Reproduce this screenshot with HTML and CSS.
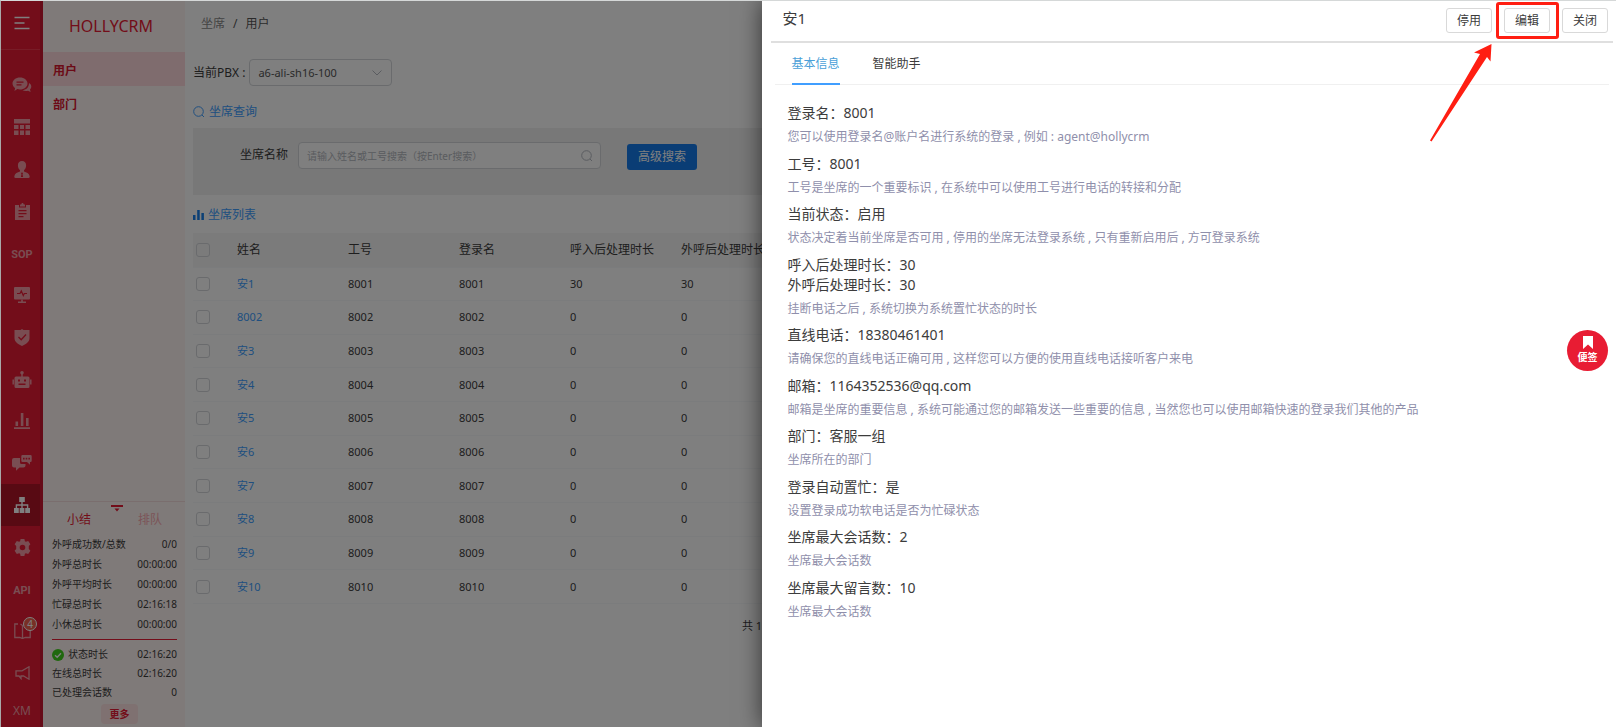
FILE: index.html
```html
<!DOCTYPE html>
<html lang="zh-CN">
<head>
  <meta charset="UTF-8" />
  <meta name="viewport" content="width=device-width, initial-scale=1.0" />
  <title>HOLLYCRM</title>
  <link rel="stylesheet" href="styles.css">
</head>
<body>
  <div class="app">
    <nav class="rail">
      <button class="rail-toggle" aria-label="菜单">
        <svg width="16" height="14" viewBox="0 0 16 14"><path d="M0.5 1.5h15M0.5 7h10M0.5 12.500h15" stroke="#fff" stroke-width="1.300" fill="none"/></svg>
      </button>
      <div class="rail-list">
        <a href="#" class="rail-item" aria-label="会话"><svg width="20" height="16" viewBox="0 0 20 16"><path fill-rule="evenodd" d="M8 0.500c4.300 0 7.500 2.700 7.500 6s-3.200 6-7.500 6c-1 0-1.900-.1-2.700-.4L2.500 14l.6-2.900C1.500 10 .5 8.400.5 6.500c0-3.300 3.200-6 7.500-6zM4.500 4.500v1.200h7V4.500zM4.500 7.300v1.200h5V7.300z"/><path d="M17 6c1.500.8 2.300 2 2.300 3.600 0 1.200-.5 2.200-1.300 3l.6 2.400-2.600-1.200c-2 .5-4.200.2-5.600-.6C14 13 17 10.500 17 6z"/></svg></a>
        <a href="#" class="rail-item" aria-label="报表"><svg width="16" height="16" viewBox="0 0 16 16"><path d="M0 0h16v4.500H0zM0 6h4.500v4H0zM6 6h4v4H6zM11.500 6H16v4h-4.500zM0 11.500h4.500V16H0zM6 11.500h4V16H6zM11.500 11.500H16V16h-4.500z"/></svg></a>
        <a href="#" class="rail-item" aria-label="客户"><svg width="16" height="17" viewBox="0 0 16 17"><path fill-rule="evenodd" d="M8 0c2.600 0 4.100 1.700 4.100 4.300 0 2-.8 4-2.100 5v1.200c2.500.8 5.100 1.700 5.600 4.500.3 1.200-.1 2-1.100 2h-13c-1 0-1.400-.8-1.100-2 .5-2.800 3.100-3.700 5.600-4.500V9.300c-1.300-1-2.100-3-2.100-5C3.900 1.700 5.400 0 8 0zM8 11.300l-1 1 .5 1-.6 2.700h2.200l-.6-2.700.5-1z"/></svg></a>
        <a href="#" class="rail-item" aria-label="工单"><svg width="15" height="17" viewBox="0 0 15 17"><path fill-rule="evenodd" d="M0 2h4v2.500h7V2h4v15H0zM3.500 7v1.200h8V7zM3.500 10v1.200h8V10zM3.500 13v1.200h5V13z"/><path d="M5 1.500h1.200C6.300.6 6.800 0 7.500 0s1.200.6 1.300 1.500H10v2H5z"/></svg></a>
        <a href="#" class="rail-item rail-text">SOP</a>
        <a href="#" class="rail-item" aria-label="监控"><svg width="16" height="16" viewBox="0 0 16 16"><path d="M1 0h14q1 0 1 1v10.500q0 1-1 1H1q-1 0-1-1V1q0-1 1-1z"/><path d="M3 6.500h3L7.300 4l2 4.500 1-2H13" stroke="#e61a34" stroke-width="1.200" fill="none"/><path d="M7.200 12.500h1.600V14.500H12V16H4v-1.500h3.200z"/></svg></a>
        <a href="#" class="rail-item" aria-label="质检"><svg width="16" height="17" viewBox="0 0 16 17"><path d="M8 0l1.500 1H15.500v8c0 4-3.500 6.300-7.500 8-4-1.700-7.500-4-7.500-8V1h6z"/><path d="M4.500 8l2.700 2.700L12 5.500" stroke="#e61a34" stroke-width="1.300" fill="none"/></svg></a>
        <a href="#" class="rail-item" aria-label="机器人"><svg width="20" height="17" viewBox="0 0 20 17"><path d="M0.500 8.500h1.400v5H.5zM18.100 8.500h1.400v5h-1.400zM9.300 3h1.400v3H9.300z"/><circle cx="10" cy="1.800" r="1.800"/><path fill-rule="evenodd" d="M4 5.500h12q1.500 0 1.500 1.500v8.500q0 1.500-1.500 1.500H4q-1.500 0-1.500-1.500V7q0-1.500 1.500-1.500zM6 8.500v2h2v-2zM12 8.500v2h2v-2zM6.500 12.500v1.500h7v-1.500z"/></svg></a>
        <a href="#" class="rail-item" aria-label="统计"><svg width="16" height="16" viewBox="0 0 16 16"><path d="M0 14.200h16V16H0zM1.500 8.500h2.600v4.500H1.500zM6.800 0h2.600v13H6.800zM12 5h2.600v8H12z"/></svg></a>
        <a href="#" class="rail-item" aria-label="消息"><svg width="20" height="16" viewBox="0 0 20 16"><path d="M2 3h6v4.500q0 1.500 1.500 1.500H13.500v1.500q0 2-2 2H7.500L4 15.700v-3.200H2q-2 0-2-2V5q0-2 2-2z"/><path fill-rule="evenodd" d="M10.500 0h8q1.200 0 1.200 1.200v4.600Q19.700 7 18.500 7H18v2.700L15 7h-4.500Q9.300 7 9.300 5.800V1.200Q9.300 0 10.500 0zM11 2.800v1.600h1.600V2.800zM13.700 2.800v1.600h1.600V2.800zM16.400 2.800v1.600H18V2.800z"/></svg></a>
        <a href="#" class="rail-item active" aria-label="坐席"><svg width="16" height="16" viewBox="0 0 16 16"><path d="M5.200 0h5.600v5H5.200zM0 11h4.800v5H0zM5.600 11h4.800v5H5.600zM11.200 11H16v5h-4.800z"/><path d="M8 5v6M2.400 11V8h11.200v3" stroke="#fff" stroke-width="1.400" fill="none"/></svg></a>
        <a href="#" class="rail-item" aria-label="设置"><svg width="17" height="17" viewBox="0 0 17 17"><path fill-rule="evenodd" d="M6.600 0h3.800l.5 2.300 1 .5L14.200 2l2.200 3.300-1.600 1.800v2.800l1.600 1.800-2.200 3.300-2.300-.8-1 .5-.5 2.300H6.600l-.5-2.300-1-.5-2.300.8L.6 11.700l1.600-1.800V7.100L.6 5.300 2.800 2l2.300.8 1-.5zM8.500 5.700a2.800 2.800 0 1 0 0 5.600 2.800 2.800 0 0 0 0-5.600z"/></svg></a>
        <a href="#" class="rail-item rail-text">API</a>
        <a href="#" class="rail-item line" aria-label="文档"><svg width="17" height="16" viewBox="0 0 17 16"><path d="M4 1H.8v13.500h5L8.500 15.500l2.700-1h5V7M8.500 15V2.500L6.500 1"/></svg><span class="badge">4</span></a>
        <a href="#" class="rail-item line" aria-label="公告"><svg width="15" height="14" viewBox="0 0 15 14"><path d="M14 .8v12.400L8.500 10H6v2.500L4 10H1V4.800h6z"/></svg></a>
        <a href="#" class="rail-item rail-user">XM</a>
      </div>
    </nav>

    <aside class="side">
      <div class="brand">HOLLYCRM</div>
      <a href="#" class="side-link active">用户</a>
      <a href="#" class="side-link">部门</a>

      <div class="stats">
        <svg class="stats-handle" width="12" height="7" viewBox="0 0 12 7"><path d="M0 0h12v2H0zM3.500 3.500h5L6 6.500z"/></svg>
        <div class="stats-tabs">
          <a href="#">小结</a>
          <a href="#" class="off">排队</a>
        </div>
        <ul class="stats-list">
          <li><span>外呼成功数/总数</span><span>0/0</span></li>
          <li><span>外呼总时长</span><span>00:00:00</span></li>
          <li><span>外呼平均时长</span><span>00:00:00</span></li>
          <li><span>忙碌总时长</span><span>02:16:18</span></li>
          <li><span>小休总时长</span><span>00:00:00</span></li>
        </ul>
        <ul class="stats-list">
          <li><span class="state"><svg width="12" height="12" viewBox="0 0 12 12"><circle cx="6" cy="6" r="6" fill="#3fd01c"/><path d="M3 6.200l2.200 2.100L9 4.300" stroke="#fff" stroke-width="1.400" fill="none"/></svg>状态时长</span><span>02:16:20</span></li>
          <li><span>在线总时长</span><span>02:16:20</span></li>
          <li><span>已处理会话数</span><span>0</span></li>
        </ul>
        <button class="more">更多</button>
      </div>
    </aside>

    <main class="main">
      <div class="crumbs"><a href="#">坐席</a><span>/</span><span>用户</span></div>

      <div class="pbx">
        <label for="pbx">当前PBX :</label>
        <div class="select">
          <select id="pbx"><option>a6-ali-sh16-100</option></select>
          <svg width="10" height="6" viewBox="0 0 10 6"><path d="M0.500 0.500L5 5l4.500-4.500"/></svg>
        </div>
      </div>

      <h2 class="section"><svg width="12" height="12" viewBox="0 0 12 12" fill="none" stroke="#409eff"><circle cx="5.500" cy="5.500" r="4.800"/><path d="M9 9l2 2"/></svg>坐席查询</h2>
      <form class="search">
        <label for="name">坐席名称</label>
        <div class="search-box">
          <input type="text" id="name" placeholder="请输入姓名或工号搜索（按Enter搜索）" />
          <svg width="12" height="12" viewBox="0 0 12 12"><circle cx="5.500" cy="5.500" r="4.800"/><path d="M9 9l2 2"/></svg>
        </div>
        <button type="button" class="btn-primary">高级搜索</button>
      </form>

      <h2 class="section"><svg width="11" height="10" viewBox="0 0 11 10" fill="#1880ec"><path d="M0 5h2.500v5H0zM4.200 0h2.500v10H4.200zM8.400 3h2.500v7H8.400z"/></svg>坐席列表</h2>
      <table class="list">
        <colgroup><col class="c-check"><col class="c-col"><col class="c-col"><col class="c-col"><col class="c-col"><col></colgroup>
        <thead>
          <tr><th><input type="checkbox" aria-label="全选" /></th><th>姓名</th><th>工号</th><th>登录名</th><th>呼入后处理时长</th><th>外呼后处理时长</th></tr>
        </thead>
        <tbody>
          <tr><td><input type="checkbox" aria-label="安1" /></td><td><a href="#">安1</a></td><td>8001</td><td>8001</td><td>30</td><td>30</td></tr>
          <tr><td><input type="checkbox" aria-label="8002" /></td><td><a href="#">8002</a></td><td>8002</td><td>8002</td><td>0</td><td>0</td></tr>
          <tr><td><input type="checkbox" aria-label="安3" /></td><td><a href="#">安3</a></td><td>8003</td><td>8003</td><td>0</td><td>0</td></tr>
          <tr><td><input type="checkbox" aria-label="安4" /></td><td><a href="#">安4</a></td><td>8004</td><td>8004</td><td>0</td><td>0</td></tr>
          <tr><td><input type="checkbox" aria-label="安5" /></td><td><a href="#">安5</a></td><td>8005</td><td>8005</td><td>0</td><td>0</td></tr>
          <tr><td><input type="checkbox" aria-label="安6" /></td><td><a href="#">安6</a></td><td>8006</td><td>8006</td><td>0</td><td>0</td></tr>
          <tr><td><input type="checkbox" aria-label="安7" /></td><td><a href="#">安7</a></td><td>8007</td><td>8007</td><td>0</td><td>0</td></tr>
          <tr><td><input type="checkbox" aria-label="安8" /></td><td><a href="#">安8</a></td><td>8008</td><td>8008</td><td>0</td><td>0</td></tr>
          <tr><td><input type="checkbox" aria-label="安9" /></td><td><a href="#">安9</a></td><td>8009</td><td>8009</td><td>0</td><td>0</td></tr>
          <tr><td><input type="checkbox" aria-label="安10" /></td><td><a href="#">安10</a></td><td>8010</td><td>8010</td><td>0</td><td>0</td></tr>
        </tbody>
      </table>
      <div class="pager">共 1</div>
    </main>

    <div class="mask"></div>

    <section class="drawer">
      <header class="drawer-head">
        <h1>安1</h1>
        <div class="actions">
          <button class="btn">停用</button>
          <div class="marked">
            <button class="btn">编辑</button>
            <svg class="arrow" width="62" height="98" viewBox="0 0 62 98"><path d="M61.500 0L44 8.500l6 1.500L0 96.500l1.500 1L57 13l3.500 4.500z"/></svg>
          </div>
          <button class="btn">关闭</button>
        </div>
      </header>
      <div class="tabs">
        <a href="#" class="tab active">基本信息</a>
        <a href="#" class="tab">智能助手</a>
      </div>
      <div class="info">
        <div class="field"><p>登录名：8001</p><small>您可以使用登录名@账户名进行系统的登录 , 例如 : agent@hollycrm</small></div>
        <div class="field"><p>工号：8001</p><small>工号是坐席的一个重要标识 , 在系统中可以使用工号进行电话的转接和分配</small></div>
        <div class="field"><p>当前状态：启用</p><small>状态决定着当前坐席是否可用 , 停用的坐席无法登录系统 , 只有重新启用后 , 方可登录系统</small></div>
        <div class="field"><p>呼入后处理时长：30</p><p>外呼后处理时长：30</p><small>挂断电话之后 , 系统切换为系统置忙状态的时长</small></div>
        <div class="field"><p>直线电话：18380461401</p><small>请确保您的直线电话正确可用 , 这样您可以方便的使用直线电话接听客户来电</small></div>
        <div class="field"><p>邮箱：1164352536@qq.com</p><small>邮箱是坐席的重要信息 , 系统可能通过您的邮箱发送一些重要的信息 , 当然您也可以使用邮箱快速的登录我们其他的产品</small></div>
        <div class="field"><p>部门：客服一组</p><small>坐席所在的部门</small></div>
        <div class="field"><p>登录自动置忙：是</p><small>设置登录成功软电话是否为忙碌状态</small></div>
        <div class="field"><p>坐席最大会话数：2</p><small>坐席最大会话数</small></div>
        <div class="field"><p>坐席最大留言数：10</p><small>坐席最大会话数</small></div>
      </div>
    </section>

    <button class="note">
      <svg width="10" height="13" viewBox="0 0 10 13"><path d="M0 0h10v13L5 8.500 0 13z" fill="#fff"/></svg>
      便签
    </button>
  </div>
</body>
</html>
```
FILE: styles.css
```css
*,
*::before,
*::after {
  box-sizing: border-box;
}

body {
  margin: 0;
  background: #fff;
  color: #3c3c3c;
  font-family: "Noto Sans", "Noto Sans CJK SC", sans-serif;
  font-size: 12px;
  line-height: 20px;
}

a {
  color: inherit;
  text-decoration: none;
}

h1,
h2,
p,
ul {
  margin: 0;
  padding: 0;
  font-weight: normal;
  list-style: none;
}

button,
input,
select {
  font: inherit;
  color: inherit;
  margin: 0;
}

button {
  cursor: pointer;
  padding: 0;
  border: 0;
}

.app {
  position: relative;
  display: grid;
  grid-template-columns: 42px 142px 1fr;
  height: 100vh;
  overflow: hidden;
  border-top: 1px solid #d5d8d8;
  border-left: 1px solid #a9a9a9;
}

/* left icon bar */
.rail {
  display: flex;
  flex-direction: column;
  background: #e61a34;
  border-right: 3px solid #cc1730;
}

.rail-toggle {
  flex: none;
  height: 49px;
  padding: 2px 0 0 3px;
  background: none;
  border-bottom: 1px solid #f0384e;
}

.rail-list {
  padding-top: 14px;
}

.rail-item {
  position: relative;
  display: flex;
  align-items: center;
  justify-content: center;
  height: 42px;
  padding-left: 3px;
  color: #f39aa5;
}

.rail-item svg {
  fill: currentColor;
}

.rail-item.line svg {
  fill: none;
  stroke: currentColor;
  stroke-width: 1.3;
}

.rail-item.active {
  background: #b01426;
  color: #fff;
}

.rail-text {
  padding-top: 3px;
  font-family: Roboto, sans-serif;
  font-weight: bold;
  font-size: 11px;
}

.rail-user {
  height: 34px;
}

.badge {
  position: absolute;
  top: 7px;
  right: 3px;
  width: 14px;
  height: 14px;
  border: 1px solid #fff;
  border-radius: 50%;
  background: #f0604d;
  color: #fff;
  font-size: 10px;
  line-height: 12px;
  text-align: center;
}

/* second level menu */
.side {
  display: flex;
  flex-direction: column;
  background: #fff4f2;
}

.brand {
  height: 51px;
  padding-right: 6px;
  line-height: 50px;
  font-size: 16px;
  text-align: center;
  color: #e61a34;
}

.side-link {
  height: 34px;
  padding: 0 10px;
  line-height: 38px;
  font-weight: bold;
  color: #d8152e;
}

.side-link.active {
  background: #ffd9dc;
}

.stats {
  margin-top: auto;
  padding: 3px 8px 4px 9px;
  border-top: 1px solid #f5dcdc;
  font-size: 10px;
  text-align: center;
}

.stats-handle {
  display: block;
  margin-left: 59px;
  fill: #e61a34;
}

.stats-tabs {
  display: flex;
  justify-content: space-between;
  padding: 0 15px 6px;
  line-height: 16px;
  font-size: 12px;
  color: #e61a34;
}

.stats-tabs .off {
  color: #f8a9b1;
}

.stats-list {
  padding-bottom: 5px;
}

.stats-list + .stats-list {
  padding: 5px 0 2px;
  line-height: 19px;
  border-top: 1px solid #e61a34;
}

.stats-list li {
  display: flex;
  justify-content: space-between;
}

.state {
  display: flex;
  align-items: center;
  gap: 4px;
}

.more {
  width: 37px;
  height: 20px;
  margin-left: 10px;
  border-radius: 4px;
  background: #ffe2e2;
  color: #e61a34;
  font-weight: bold;
}

/* page content */
.main {
  padding: 13px 8px;
}

.crumbs {
  display: flex;
  gap: 8px;
  padding-left: 8px;
  color: #555;
}

.crumbs a {
  color: #888;
}

.pbx {
  display: flex;
  align-items: center;
  gap: 4px;
  margin-top: 25px;
}

.select {
  position: relative;
}

.select select {
  display: block;
  width: 143px;
  height: 27px;
  padding: 0 8px;
  appearance: none;
  border: 1px solid #d4d6da;
  border-radius: 4px;
  background: #fff;
  font-size: 11px;
  color: #555;
}

.select svg {
  position: absolute;
  right: 10px;
  top: 11px;
  fill: none;
  stroke: #b4b8c0;
}

.section {
  display: flex;
  align-items: center;
  gap: 4px;
  margin-top: 16px;
  font-size: 12px;
  color: #409eff;
}

.search {
  display: flex;
  align-items: flex-start;
  height: 67px;
  margin-top: 6px;
  padding: 14px 47px;
  background: #f0f0f0;
}

.search label {
  margin-right: 10px;
  line-height: 26px;
}

.search-box {
  position: relative;
  margin-right: 26px;
}

.search-box input {
  display: block;
  width: 303px;
  height: 27px;
  padding: 0 8px;
  border: 1px solid #d4d6da;
  border-radius: 4px;
  background: #fff;
  font-size: 10px;
}

.search-box input::placeholder {
  color: #b4b8c0;
}

.search-box svg {
  position: absolute;
  right: 8px;
  top: 8px;
  fill: none;
  stroke: #b4b8c0;
}

.btn-primary {
  width: 70px;
  height: 26px;
  margin-top: 2px;
  border-radius: 3px;
  background: #147bea;
  color: #fff;
}

.search + .section {
  margin-top: 10px;
}

.list {
  width: 100%;
  height: 371px;
  margin-top: 8px;
  table-layout: fixed;
  border-collapse: collapse;
  font-size: 11px;
}

.c-check {
  width: 44px;
}

.c-col {
  width: 111px;
}

.list th,
.list td {
  padding: 0;
  border-bottom: 1px solid #f7f8fa;
  line-height: 16px;
  text-align: left;
}

.list th {
  height: 34px;
  background: #f7f7f7;
  font-size: 12px;
  font-weight: normal;
}

.list a {
  color: #409eff;
}

.list input {
  display: block;
  width: 14px;
  height: 14px;
  margin-left: 3px;
  appearance: none;
  border: 1px solid #d4d6da;
  border-radius: 3px;
}

.pager {
  margin: 12px 0 0 549px;
  font-size: 11px;
}

.mask {
  position: absolute;
  inset: 0;
  background: rgba(0, 0, 0, 0.5);
}

/* user detail drawer */
.drawer {
  position: absolute;
  top: 0;
  right: 0;
  bottom: 0;
  width: calc(50% + 47px);
  padding: 0 3px 0 9px;
  background: #fff;
  box-shadow: 0 0 22px rgba(0, 0, 0, 0.6);
}

.drawer-head {
  display: flex;
  justify-content: space-between;
  height: 42px;
  padding: 7px 5px 0 12px;
  border-bottom: 2px solid #dfdfdf;
}

.drawer-head h1 {
  font-size: 15px;
}

.actions {
  display: flex;
  gap: 12px;
}

.btn {
  display: block;
  width: 46px;
  height: 25px;
  border: 1px solid #d9d9d9;
  border-radius: 3px;
  background: #fff;
}

.marked {
  position: relative;
}

.marked::after {
  content: "";
  position: absolute;
  top: -6px;
  left: -8px;
  width: 63px;
  height: 37px;
  border: 3px solid #ff1e12;
  border-radius: 3px;
  pointer-events: none;
}

.arrow {
  position: absolute;
  top: 36px;
  right: 58px;
  fill: #ff1e12;
}

.tabs {
  display: flex;
  gap: 33px;
  margin: 0 4px;
  padding: 0 17px;
  border-bottom: 1px solid #f0f0f0;
}

.tab {
  margin-bottom: -1px;
  padding-top: 2px;
  line-height: 38px;
  border-bottom: 2px solid transparent;
}

.tab.active {
  color: #4a9fd8;
  border-color: #409eff;
}

.info {
  padding: 18px 17px;
}

.field {
  margin-bottom: 7px;
}

.field:nth-child(even) {
  margin-bottom: 6px;
}

.field p {
  font-size: 14px;
}

.field small {
  display: block;
  margin-top: 4px;
  font-size: 12px;
  color: #8f8fab;
}

/* floating note button */
.note {
  position: absolute;
  right: 8px;
  top: 329px;
  display: flex;
  flex-direction: column;
  align-items: center;
  justify-content: center;
  width: 41px;
  height: 41px;
  border-radius: 50%;
  background: #e81c33;
  color: #fff;
  font-size: 10px;
  font-weight: bold;
  line-height: 16px;
}
```
